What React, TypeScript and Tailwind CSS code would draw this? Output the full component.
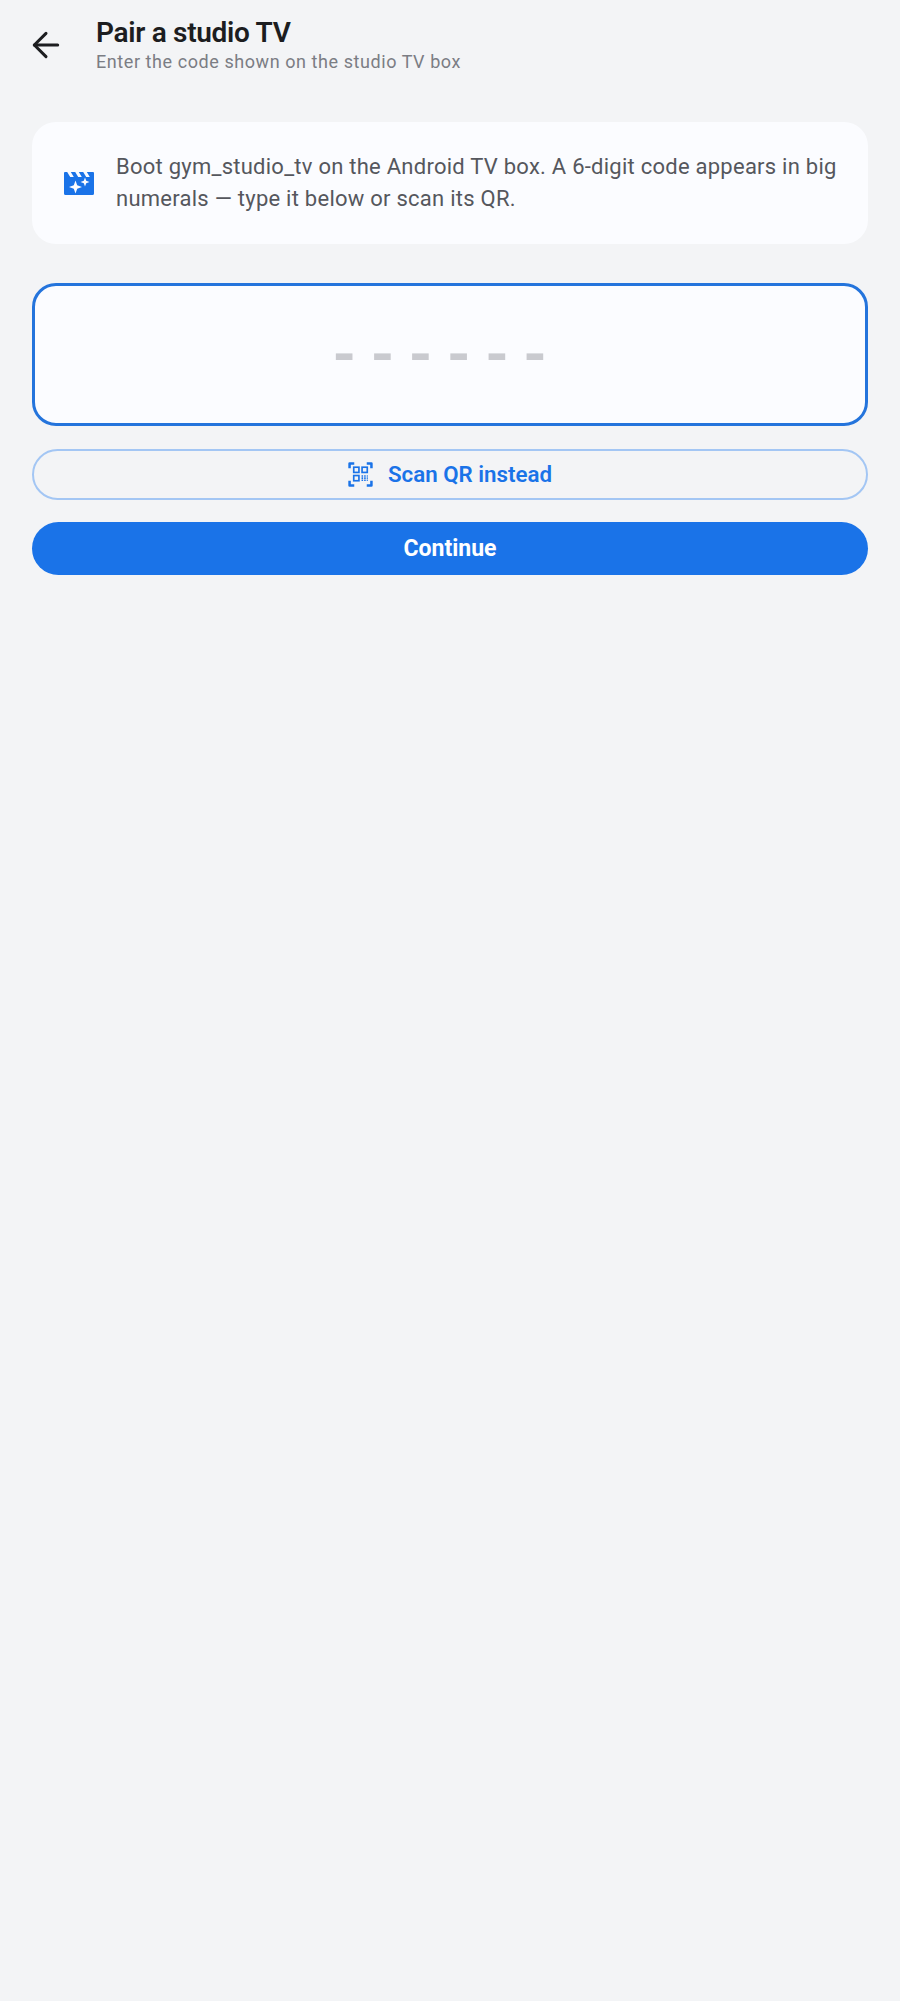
import { ArrowLeft } from "lucide-react";

const roboto = { fontFamily: "Roboto, sans-serif" };

const ClapperIcon = () => (
  <svg viewBox="0 0 30 24" className="h-6 w-[30px] shrink-0" aria-hidden="true">
    <path
      fill="#1a73e8"
      d="M0 2a1 1 0 0 1 1-1h2.200l3 5h3.600l-3-5h4.400l3 5h3.600l-3-5h4.400l3 5h3.600l-3-5H29a1 1 0 0 1 1 1v20.500a1.500 1.500 0 0 1-1.500 1.500h-27A1.500 1.500 0 0 1 0 22.500z"
    />
    <path
      fill="#fbfcff"
      d="M11.500 9.500l1.700 4.800 4.800 1.700-4.800 1.700-1.700 4.800-1.700-4.800L5 16l4.800-1.700zM21 6.500l1.200 3.300 3.300 1.200-3.300 1.200-1.200 3.300-1.200-3.300-3.300-1.200 3.300-1.200z"
    />
  </svg>
);

const ScanQrIcon = () => (
  <svg viewBox="0 0 24 24" className="h-[25px] w-[25px] shrink-0" fill="none" stroke="#1a73e8" aria-hidden="true">
    <path strokeWidth="2.400" strokeLinejoin="round" d="M6 1.500H1.500V6M18 1.500h4.500V6M1.500 18v4.500H6M22.500 18v4.500H18" />
    <rect x="5.500" y="5" width="5" height="5" strokeWidth="1.600" />
    <rect x="13.500" y="5" width="5" height="5" strokeWidth="1.600" />
    <rect x="5.500" y="13" width="5" height="5" strokeWidth="1.600" />
    <path strokeWidth="1.500" strokeDasharray="1.500 1" d="M13 13.500h6M13 15.500h6M13 17.500h6" />
  </svg>
);

export default function App() {
  return (
    <div className="min-h-[2001px] w-full bg-[#f3f4f6] px-8" style={roboto}>
      <header className="flex h-[90px] items-start">
        <ArrowLeft className="-ml-[6px] mt-[25px] h-10 w-10 shrink-0 text-[#1c1d20]" strokeWidth={1.8} />
        <div className="ml-[30px] pt-[15px]">
          <h1 className="text-[28px] leading-[36px] font-semibold tracking-[-0.3px] text-[#1c1d20]">Pair a studio TV</h1>
          <p className="text-[18px] leading-[22px] tracking-[0.57px] text-[#7b7d84]">
            Enter the code shown on the studio TV box
          </p>
        </div>
      </header>

      <section className="mt-8 flex h-[122px] items-center gap-[22px] rounded-[24px] bg-[#fbfcff] pl-[32px] pr-6">
        <ClapperIcon />
        <p className="text-[22px] leading-[32px] tracking-[0.25px] text-[#55575d]">
          Boot gym_studio_tv on the Android TV box. A 6-digit code appears in big numerals — type it below or scan its QR.
        </p>
      </section>

      <div className="mt-[39px] flex h-[143px] items-center justify-center rounded-[24px] border-[3px] border-[#2474dc] bg-[#fbfcff] pr-[6px]">
        <span className="text-[60px] leading-none font-bold tracking-[14.500px] text-[#c9cacf]">------</span>
      </div>

      <button className="mt-[23px] flex h-[51px] w-full items-center justify-center gap-[15px] rounded-full border-2 border-[#a3c6f4] text-[22.300px] font-semibold text-[#1a73e8]">
        <ScanQrIcon />
        <span className="pt-[1px]">Scan QR instead</span>
      </button>

      <button className="mt-[22px] h-[53px] w-full rounded-full bg-[#1a73e8] pt-[2px] text-[23px] font-bold text-white">
        Continue
      </button>
    </div>
  );
}
